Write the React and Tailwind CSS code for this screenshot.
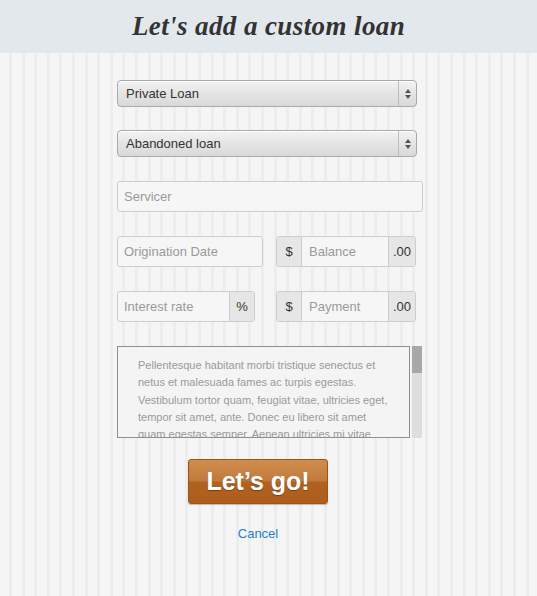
import React from 'react';

const sans = "font-['Liberation_Sans',Arial,sans-serif]";

function SelectBox({ label }) {
  return (
    <div className="flex h-[27px] w-[300px] items-stretch overflow-hidden rounded-[4px] border border-[#a9a9a9] bg-[linear-gradient(180deg,#f3f3f3_0%,#e4e4e4_50%,#d9d9d9_100%)] shadow-[inset_0_1px_0_#fff]">
      <div className="flex flex-1 items-center pl-[8px] text-[13px] text-[#333]">{label}</div>
      <div className="flex w-[18px] flex-col items-center justify-center gap-[2px] border-l border-[#bdbdbd]">
        <span className="block h-0 w-0 border-x-[3px] border-b-[4px] border-x-transparent border-b-[#555]" />
        <span className="block h-0 w-0 border-x-[3px] border-t-[4px] border-x-transparent border-t-[#555]" />
      </div>
    </div>
  );
}

function Addon({ children, side }) {
  return (
    <div
      className={`flex items-center justify-center bg-[#e6e6e6] text-[13px] text-[#333] ${
        side === 'left' ? 'border-r border-[#ccc]' : 'border-l border-[#ccc]'
      }`}
    >
      {children}
    </div>
  );
}

function MoneyField({ placeholder }) {
  return (
    <div className="grid h-[31px] w-[140px] grid-cols-[25px_1fr_27px] overflow-hidden rounded-[3px] border border-[#cdcdcd] bg-[#f6f6f6]">
      <Addon side="left">$</Addon>
      <div className="flex items-center pl-[7px] text-[13px] text-[#9a9a9a]">{placeholder}</div>
      <Addon side="right">.00</Addon>
    </div>
  );
}

export default function App() {
  return (
    <div className={`${sans} min-h-[596px] w-full bg-[repeating-linear-gradient(90deg,#f5f5f5_0px,#f5f5f5_9px,#ededed_9px,#ededed_12px,#f5f5f5_12px,#f5f5f5_12.6px)]`}>
      {/* Header */}
      <div className="flex h-[53px] items-center justify-center bg-[#e3e8ec]">
        <h1 className="font-['Liberation_Serif',Georgia,serif] text-[27px] font-bold italic tracking-[0.4px] text-[#333]">
          Let's add a custom loan
        </h1>
      </div>

      {/* Form */}
      <div className="ml-[117px] flex w-[306px] flex-col pt-[27px]">
        <SelectBox label="Private Loan" />
        <div className="mt-[23px]">
          <SelectBox label="Abandoned loan" />
        </div>

        <div className="mt-[24px] flex h-[31px] w-[306px] items-center rounded-[3px] border border-[#cdcdcd] bg-[#f6f6f6] pl-[6px] text-[13px] text-[#9a9a9a]">
          Servicer
        </div>

        <div className="mt-[24px] flex w-[299px] justify-between">
          <div className="flex h-[31px] w-[146px] items-center rounded-[3px] border border-[#cdcdcd] bg-[#f6f6f6] pl-[6px] text-[13px] text-[#9a9a9a]">
            Origination Date
          </div>
          <MoneyField placeholder="Balance" />
        </div>

        <div className="mt-[24px] flex w-[299px] justify-between">
          <div className="grid h-[31px] w-[138px] grid-cols-[1fr_25px] overflow-hidden rounded-[3px] border border-[#cdcdcd] bg-[#f6f6f6]">
            <div className="flex items-center pl-[6px] text-[13px] text-[#9a9a9a]">Interest rate</div>
            <Addon side="right">%</Addon>
          </div>
          <MoneyField placeholder="Payment" />
        </div>

        {/* Textarea */}
        <div className="mt-[24px] flex h-[92px] w-[305px]">
          <div className="h-[92px] w-[293px] overflow-hidden border border-[#8f8f8f] bg-[#f4f4f4] pl-[20px] pr-[18px] pt-[10px] text-[11px] leading-[17.3px] text-[#9a9a9a]">
            Pellentesque habitant morbi tristique senectus et netus et malesuada fames ac turpis egestas.
            Vestibulum tortor quam, feugiat vitae, ultricies eget, tempor sit amet, ante. Donec eu libero sit amet
            quam egestas semper. Aenean ultricies mi vitae est.
          </div>
          <div className="ml-[2px] flex h-[92px] w-[10px] flex-col bg-[#dedede]">
            <div className="h-[27px] w-full bg-[#a8a8a8]" />
          </div>
        </div>
      </div>

      {/* Actions */}
      <div className="ml-[188px] flex w-[140px] flex-col items-center">
        <button className="mt-[21px] flex h-[45px] w-[140px] items-center justify-center rounded-[3px] border border-[#9c5519] bg-[linear-gradient(180deg,#d08d4d_0%,#c17a3d_48%,#b2621f_52%,#ad5d1d_100%)] text-[25px] font-bold text-white shadow-[0_1px_1px_rgba(0,0,0,0.25)] [text-shadow:0_1px_1px_rgba(0,0,0,0.35)]">
          Let’s go!
        </button>
        <a className="mt-[20px] text-[13px] text-[#1e7fcf]">Cancel</a>
      </div>
    </div>
  );
}
